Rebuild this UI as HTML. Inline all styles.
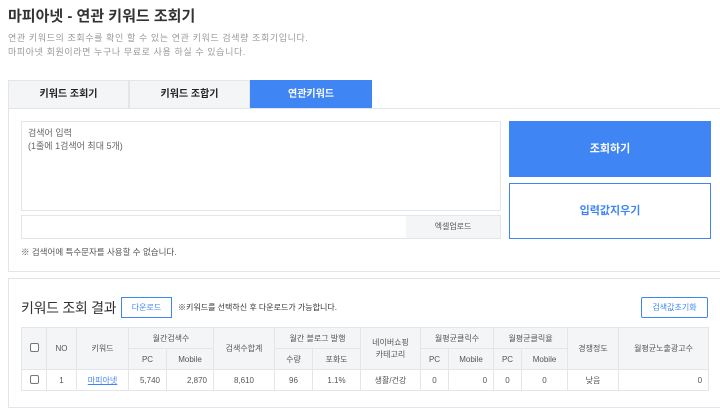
<!DOCTYPE html><html><head><meta charset="utf-8"><style>
*{box-sizing:border-box;margin:0;padding:0}
body{width:720px;height:403px;overflow:hidden;background:#fff;font-family:"Liberation Sans","Noto Sans CJK KR",sans-serif;color:#333;position:relative}
.a{position:absolute}
.tab{position:absolute;top:80px;height:29px;width:121px;background:#f4f5f7;border:1px solid #e3e5e8;font-size:10px;font-weight:bold;text-align:center;line-height:28px;color:#222}
table{border-collapse:collapse;position:absolute;left:21px;top:327px;width:687px;font-size:8px;color:#555;table-layout:fixed}
td,th{border:1px solid #e3e5e8;text-align:center;font-weight:normal;height:21px}
th{background:#f4f5f7}
.cb{display:inline-block;width:9px;height:9px;border:1px solid #777;border-radius:2px;background:#fff}
.r{text-align:right;padding-right:6px}
</style></head><body>
<div class="a" style="left:8px;top:5px;font-size:15px;font-weight:bold;color:#333">마피아넷 - 연관 키워드 조회기</div>
<div class="a" style="left:8px;top:31px;font-size:9px;color:#999;line-height:14px;letter-spacing:0.6px">연관 키워드의 조회수를 확인 할 수 있는 연관 키워드 검색량 조회기입니다.<br>마피아넷 회원이라면 누구나 무료로 사용 하실 수 있습니다.</div>
<div class="tab" style="left:8px">키워드 조회기</div>
<div class="tab" style="left:129px">키워드 조합기</div>
<div class="tab" style="left:250px;background:#3f86f4;border-color:#3f86f4;color:#fff;width:122px">연관키워드</div>
<div class="a" style="left:8px;top:108px;width:720px;height:164px;border:1px solid #e3e5e8"></div>
<div class="a" style="left:21px;top:121px;width:480px;height:90px;border:1px solid #e3e5e8;font-size:9px;color:#666;padding:5px 6px;line-height:13px">검색어 입력<br>(1줄에 1검색어 최대 5개)</div>
<div class="a" style="left:21px;top:215px;width:480px;height:24px;border:1px solid #e3e5e8"></div>
<div class="a" style="left:406px;top:216px;width:94px;height:22px;background:#f4f5f7;font-size:8px;color:#555;text-align:center;line-height:22px">엑셀업로드</div>
<div class="a" style="left:21px;top:246px;font-size:8.5px;color:#555">※ 검색어에 특수문자를 사용할 수 없습니다.</div>
<div class="a" style="left:509px;top:121px;width:202px;height:56px;background:#3f86f4;color:#fff;font-size:11px;font-weight:bold;text-align:center;line-height:56px">조회하기</div>
<div class="a" style="left:509px;top:183px;width:202px;height:56px;border:1px solid #3f86f4;color:#3f86f4;font-size:11px;font-weight:bold;text-align:center;line-height:54px">입력값지우기</div>
<div class="a" style="left:8px;top:278px;width:720px;height:130px;border:1px solid #e3e5e8"></div>
<div class="a" style="left:21px;top:298px;font-size:14px;color:#333;letter-spacing:-0.3px">키워드 조회 결과</div>
<div class="a" style="left:121px;top:297px;width:51px;height:21px;border:1px solid #3f86f4;color:#3f86f4;font-size:8px;text-align:center;line-height:19px;background:#fff">다운로드</div>
<div class="a" style="left:178px;top:302px;font-size:8px;color:#333">※키워드를 선택하신 후 다운로드가 가능합니다.</div>
<div class="a" style="left:641px;top:297px;width:67px;height:21px;border:1px solid #3f86f4;color:#3f86f4;font-size:8px;text-align:center;line-height:19px;border-radius:2px">검색값초기화</div>
<table>
<colgroup><col style="width:25px"><col style="width:30px"><col style="width:52px"><col style="width:38px"><col style="width:47px"><col style="width:61px"><col style="width:38px"><col style="width:48px"><col style="width:60px"><col style="width:28px"><col style="width:45px"><col style="width:28px"><col style="width:46px"><col style="width:51px"><col style="width:90px"></colgroup>
<tr><th rowspan="2"><span class="cb"></span></th><th rowspan="2">NO</th><th rowspan="2">키워드</th><th colspan="2">월간검색수</th><th rowspan="2">검색수합계</th><th colspan="2">월간 블로그 발행</th><th rowspan="2" style="line-height:12px">네이버쇼핑<br>카테고리</th><th colspan="2">월평균클릭수</th><th colspan="2">월평균클릭율</th><th rowspan="2">경쟁정도</th><th rowspan="2">월평균노출광고수</th></tr>
<tr><th>PC</th><th>Mobile</th><th>수량</th><th>포화도</th><th>PC</th><th>Mobile</th><th>PC</th><th>Mobile</th></tr>
<tr><td><span class="cb"></span></td><td>1</td><td><span style="color:#3f86f4;text-decoration:underline">마피아넷</span></td><td class="r">5,740</td><td class="r">2,870</td><td>8,610</td><td>96</td><td>1.1%</td><td>생활/건강</td><td>0</td><td class="r">0</td><td>0</td><td>0</td><td>낮음</td><td class="r">0</td></tr>
</table>
</body></html>
